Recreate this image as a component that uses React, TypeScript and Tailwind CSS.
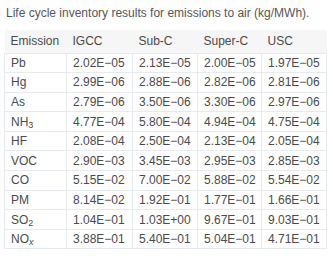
import React from "react";

type Row = { name: React.ReactNode; v: string[] };

const subCls = "text-[9px] relative top-[2px]";

const rows: Row[] = [
  { name: "Pb", v: ["2.02E−05", "2.13E−05", "2.00E−05", "1.97E−05"] },
  { name: "Hg", v: ["2.99E−06", "2.88E−06", "2.82E−06", "2.81E−06"] },
  { name: "As", v: ["2.79E−06", "3.50E−06", "3.30E−06", "2.97E−06"] },
  { name: <>NH<sub className={subCls}>3</sub></>, v: ["4.77E−04", "5.80E−04", "4.94E−04", "4.75E−04"] },
  { name: "HF", v: ["2.08E−04", "2.50E−04", "2.13E−04", "2.05E−04"] },
  { name: "VOC", v: ["2.90E−03", "3.45E−03", "2.95E−03", "2.85E−03"] },
  { name: "CO", v: ["5.15E−02", "7.00E−02", "5.88E−02", "5.54E−02"] },
  { name: "PM", v: ["8.14E−02", "1.92E−01", "1.77E−01", "1.66E−01"] },
  { name: <>SO<sub className={subCls}>2</sub></>, v: ["1.04E−01", "1.03E+00", "9.67E−01", "9.03E−01"] },
  { name: <>NO<sub className="text-[9px] italic relative top-[2px]">x</sub></>, v: ["3.88E−01", "5.40E−01", "5.04E−01", "4.71E−01"] },
];

export default function App() {
  return (
    <div
      className="w-[333px] h-[256px] bg-white text-[#4a4a4a] text-[12px] leading-none"
      style={{ fontFamily: '"Liberation Sans", Arial, sans-serif' }}
    >
      <div className="pl-[6px] pt-[7px] h-[30px] text-[12px] text-[#555]">
        Life cycle inventory results for emissions to air (kg/MWh).
      </div>
      <table className="ml-[4px] table-fixed border-collapse w-[322px]">
        <colgroup>
          <col className="w-[62px]" />
          <col className="w-[66px]" />
          <col className="w-[65px]" />
          <col className="w-[64px]" />
          <col className="w-[65px]" />
        </colgroup>
        <thead>
          <tr className="h-[23px] bg-[#f6f6f6]">
            {["Emission", "IGCC", "Sub-C", "Super-C", "USC"].map((h) => (
              <th key={h} className="text-left font-normal pl-[6px] text-[#4a4a4a]">
                {h}
              </th>
            ))}
          </tr>
        </thead>
        <tbody>
          {rows.map((r, i) => (
            <tr key={i} className="h-[19.6px]">
              <td className="pl-[6px] border border-[#e6ebf0]">{r.name}</td>
              {r.v.map((v, j) => (
                <td key={j} className="pl-[6px] border border-[#e6ebf0]">
                  {v}
                </td>
              ))}
            </tr>
          ))}
        </tbody>
      </table>
    </div>
  );
}
